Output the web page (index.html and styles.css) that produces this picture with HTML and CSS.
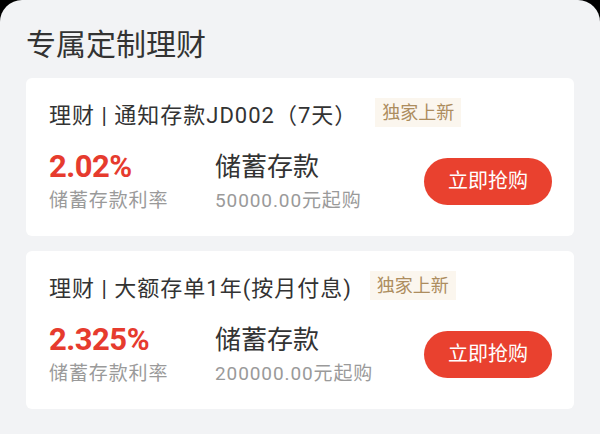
FILE: index.html
```html
<!DOCTYPE html>
<html lang="zh-CN">
<head>
    <meta charset="UTF-8">
    <meta name="viewport" content="width=device-width, initial-scale=1">
    <title>专属定制理财</title>
    <link rel="stylesheet" href="styles.css">
</head>
<body>
    <div class="screen">
        <h1 class="title">专属定制理财</h1>

        <div class="card">
            <div class="cardHead">
                <span class="name">理财 | 通知存款JD002（7天）</span>
                <span class="tag">独家上新</span>
            </div>
            <div class="cardBody">
                <div class="col rate">
                    <p class="num">2.02%</p>
                    <p class="sub">储蓄存款利率</p>
                </div>
                <div class="col kind">
                    <p class="big">储蓄存款</p>
                    <p class="sub">50000.00元起购</p>
                </div>
                <a class="btn">立即抢购</a>
            </div>
        </div>

        <div class="card">
            <div class="cardHead">
                <span class="name">理财 | 大额存单1年(按月付息)</span>
                <span class="tag">独家上新</span>
            </div>
            <div class="cardBody">
                <div class="col rate">
                    <p class="num">2.325%</p>
                    <p class="sub">储蓄存款利率</p>
                </div>
                <div class="col kind">
                    <p class="big">储蓄存款</p>
                    <p class="sub">200000.00元起购</p>
                </div>
                <a class="btn">立即抢购</a>
            </div>
        </div>
    </div>
</body>
</html>
```

FILE: styles.css
```css
body,html {
    margin: 0;
    height: 100%;
    width: 100%;
    background: #000;
}
body {
    font-family: Roboto, "Noto Sans CJK SC", sans-serif;
    color: #333;
}
p {
    margin: 0;
}
a {
    text-decoration: none;
}
.screen {
    box-sizing: border-box;
    height: 100%;
    background: #f2f3f5;
    border-radius: 22px 22px 0 0;
    padding: 27px 26px 0 26px;
}
.title {
    margin: 0;
    font-size: 30px;
    line-height: 36px;
    font-weight: normal;
    color: #333;
}
.card {
    margin-top: 15px;
    background: #fff;
    border-radius: 6px;
    padding: 20px 22px 23px 23px;
}
.cardHead {
    display: flex;
    align-items: center;
    height: 29px;
}
.cardHead .name {
    font-size: 22px;
    letter-spacing: 1px;
    color: #333;
}
.cardHead .tag {
    margin-left: 18px;
    background: #fbf6ee;
    color: #ad8d5e;
    font-size: 18px;
    line-height: 29px;
    padding: 0 7px;
}
.cardBody {
    display: flex;
    align-items: center;
    margin-top: 23px;
}
.col {
    display: flex;
    flex-direction: column;
    gap: 5px;
}
.rate {
    width: 166px;
}
.rate .num {
    font-size: 31px;
    line-height: 34px;
    font-weight: bold;
    color: #e63b2e;
    letter-spacing: -0.5px;
}
.kind {
    flex: 1;
}
.kind .big {
    font-size: 26px;
    line-height: 34px;
    color: #333;
}
.sub {
    font-size: 19px;
    line-height: 24px;
    letter-spacing: 0.9px;
    color: #9a9a9a;
}
.btn {
    width: 128px;
    height: 47px;
    line-height: 47px;
    border-radius: 24px;
    background: #e9412f;
    color: #fff;
    text-align: center;
    font-size: 20px;
}
```
